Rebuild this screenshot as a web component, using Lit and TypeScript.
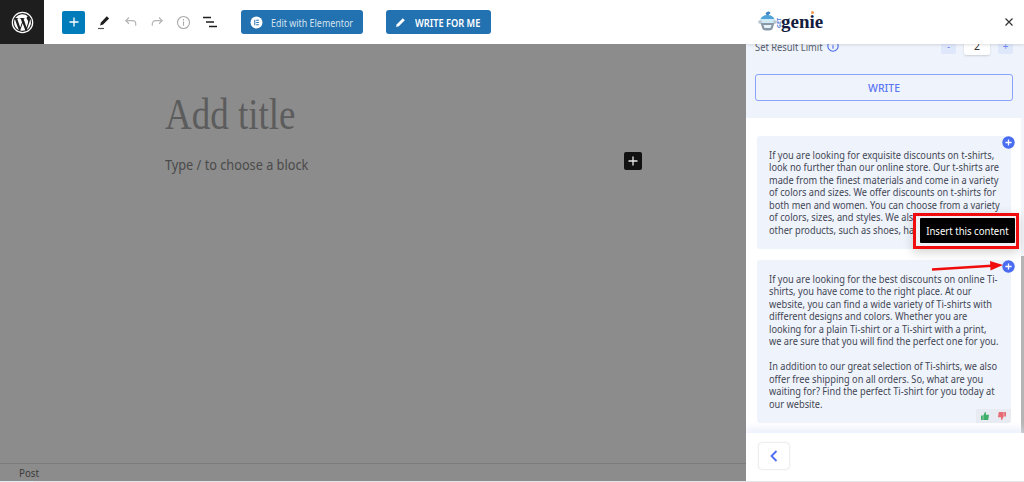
import { LitElement, html, css, svg } from "lit";
import { customElement } from "lit/decorators.js";

const plusBadge = svg`<svg width="13" height="13" viewBox="0 0 13 13"><circle cx="6.5" cy="6.5" r="6.2" fill="#4a6cf0"/><path d="M6.5 3.4v6.2M3.4 6.5h6.2" stroke="#fff" stroke-width="1.3"/></svg>`;

@customElement("app-root")
export class AppRoot extends LitElement {
  static styles = css`
    :host { display: block; width: 1024px; height: 482px; overflow: hidden; font-family: "Noto Sans", sans-serif; position: relative; background: #fff; }
    .page { display: flex; height: 481px; }
    .edge { height: 1px; background: #e2e6ea; }
    .edge i { display: block; height: 1px; width: 33px; background: #dcf0f4; }
    .left { width: 746px; display: flex; flex-direction: column; background: #8c8c8c; }
    .top { height: 44px; background: #fff; display: flex; align-items: center; flex: none; }
    .wp { width: 44px; height: 44px; background: #1e1e1e; display: flex; align-items: center; justify-content: center; }
    .add { width: 23px; height: 23px; margin-left: 18px; background: #007cba; border-radius: 2px; display: flex; align-items: center; justify-content: center; }
    .tools { display: flex; align-items: center; margin-left: 7px; gap: 2px; }
    .tools span { width: 24.5px; height: 24px; display: flex; align-items: center; justify-content: center; }
    .btn { height: 24px; background: #2271b1; border-radius: 3px; display: flex; align-items: center; box-sizing: border-box; white-space: nowrap; }
    .btn svg { flex: none; }
    .btn span { display: inline-block; transform-origin: left center; min-width: 0; flex: 1; }
    .elementor { width: 122px; margin-left: 18px; padding-left: 9px; gap: 8px; color: #d5e3ef; font-size: 11px; }
    .elementor span { transform: scaleX(.81); }
    .writefor { width: 105px; margin-left: 23px; padding-left: 9px; gap: 9px; font-weight: 600; font-size: 11px; color: #fff; }
    .writefor span { transform: scaleX(.84); }
    .main { flex: 1; padding: 47px 0 0 165px; }
    .title { font-family: "Liberation Serif", serif; font-size: 44px; line-height: 48px; color: #5c5c5c; font-weight: 400; transform: scaleX(.84); transform-origin: left center; }
    .block { width: 477px; display: flex; justify-content: space-between; align-items: center; margin-top: 15px; color: #4a4a4a; font-size: 14.5px; }
    .block span { display: inline-block; transform: scaleX(.877); transform-origin: left center; white-space: nowrap; }
    .block i { width: 18px; height: 18px; background: #111; border-radius: 2px; display: flex; align-items: center; justify-content: center; margin-top: -6px; }
    .status { height: 17px; border-top: 1px solid #7c7c7c; font-size: 11.5px; color: #3a3a3a; padding-left: 19px; line-height: 18px; flex: none; }
    .status span { display: inline-block; transform: scaleX(.85); transform-origin: left center; }

    .panel { width: 278px; position: relative; background: #fff; display: flex; flex-direction: column; overflow: hidden; }
    .head { height: 44px; flex: none; background: #fff; box-shadow: 0 1px 3px rgba(0,0,0,.12); position: relative; z-index: 2; display: flex; align-items: center; justify-content: space-between; padding: 0 10px 0 11px; box-sizing: border-box; }
    .logo { display: flex; align-items: center; position: relative; }
    .get { font-size: 5.5px; font-weight: 700; color: #4a78d8; transform: rotate(-90deg); width: 6px; margin: 6px 0 0 -2px; text-align: center; }
    .genie { font-family: "Liberation Serif", serif; font-weight: 700; font-size: 19px; color: #131c3f; line-height: 20px; margin-left: -1px; }
    .dot { position: absolute; left: 54px; top: 1px; width: 3px; height: 3px; border-radius: 50%; background: #f39a4a; }
    .config { height: 74px; flex: none; background: #eff3fb; padding: 0 11px 0 9px; box-sizing: border-box; }
    .limit { height: 24px; margin-top: -10px; display: flex; align-items: center; font-size: 11px; color: #555d6b; white-space: nowrap; }
    .limit > span { display: inline-block; transform: scaleX(.85); transform-origin: left center; width: 72px; }
    .stepper { margin-left: auto; display: flex; align-items: center; gap: 8px; }
    .stepper b { width: 15px; height: 16px; background: #dfe7fb; border-radius: 2px; color: #6f8cf0; font: 400 10px/16px "Noto Sans", sans-serif; text-align: center; }
    .stepper em { width: 26px; height: 18px; background: #fff; border-radius: 2px; box-shadow: 0 1px 2px rgba(0,0,0,.15); font: 400 10.5px/18px "Noto Sans", sans-serif; text-align: center; color: #333; }
    .write { height: 27px; margin-top: 16px; border: 1px solid #8aa2fa; border-radius: 3px; box-sizing: border-box; text-align: center; font-size: 10.5px; line-height: 26px; color: #5a76f2; font-weight: 500; }
    .results { flex: 1; min-height: 0; padding: 18px 13px 0 11px; display: flex; flex-direction: column; gap: 11px; position: relative; background: #fff; }
    .card { background: #eff3fb; border-radius: 3px; padding: 12.5px 12px 0 12px; font-size: 10.4px; line-height: 12.5px; color: #3f4654; position: relative; box-sizing: border-box; }
    .card p { margin: 0; white-space: nowrap; transform: scaleX(.889); transform-origin: left top; width: 260px; }
    .c1 { height: 113px; }
    .c2 { height: 163px; }
    .badge { position: absolute; right: -4px; top: 0; display: block; line-height: 0; }
    .rate { position: absolute; right: 0; bottom: 0; width: 35px; height: 14px; background: #e8ecf2; border-radius: 0 0 3px 0; display: flex; align-items: center; justify-content: space-around; }
    .track { position: absolute; right: 0; top: 0; bottom: 0; width: 3px; background: #f3f5fb; }
    .scroll { position: absolute; right: 0; top: 138px; width: 3px; height: 177px; background: #b5b5b5; }
    .foot { height: 48px; flex: none; background: #fff; padding: 10px 0 0 13px; box-sizing: border-box; box-shadow: 0 -5px 7px rgba(228,234,250,.7); position: relative; }
    .back { width: 30px; height: 26px; border-radius: 3px; background: #fff; box-shadow: 0 0 2px rgba(0,0,0,.25); display: flex; align-items: center; justify-content: center; }
    .tip { position: absolute; left: 167px; top: 213px; width: 106px; height: 36px; box-sizing: border-box; border: 3px solid #f00c0c; background: #eef0f4; padding: 2px 1px 2px 4px; z-index: 3; box-shadow: 0 3px 10px rgba(0,0,0,.18); }
    .tip div { background: #000; color: #fff; height: 25px; font-size: 11px; line-height: 25px; text-align: center; border-radius: 1px; white-space: nowrap; }
    .tip span { display: inline-block; transform: scaleX(.87); }
    .arrow { position: absolute; left: 184px; top: 258px; z-index: 3; display: block; }
  `;

  render() {
    return html`
      <div class="page">
        <div class="left">
          <div class="top">
            <div class="wp">
              <svg width="23" height="23" viewBox="0 0 24 24"><circle cx="12" cy="12" r="10.6" fill="none" stroke="#fff" stroke-width="1.3"/><path fill="#fff" d="M3.2 12c0 3.5 2 6.5 5 8L4 8.4A8.8 8.8 0 0 0 3.2 12zm14.700-.4c0-1.100-.4-1.800-.7-2.400-.5-.7-.9-1.300-.9-2 0-.8.6-1.500 1.400-1.500h.1A8.800 8.800 0 0 0 4.500 7.300h.6c.9 0 2.300-.1 2.300-.1.500 0 .5.700.1.700 0 0-.5.100-1 .1l3.100 9.300 1.900-5.600-1.300-3.700c-.5 0-.9-.1-.9-.1-.5 0-.4-.8.100-.7 0 0 1.400.1 2.300.1.900 0 2.300-.1 2.300-.1.500 0 .5.700.1.700 0 0-.5.100-1 .1l3.100 9.200.9-2.900c.4-1.200.7-2 .7-2.800zM12.200 12.800l-2.600 7.500a8.800 8.800 0 0 0 5.400-.1l-.1-.1-2.700-7.300zm7.500-4.900c0 .3.100.6.100.9 0 .9-.2 1.900-.7 3.200l-2.700 7.700A8.800 8.800 0 0 0 19.700 7.900z"/></svg>
            </div>
            <div class="add"><svg width="14" height="14" viewBox="0 0 14 14"><path d="M7 2.500v9M2.500 7h9" stroke="#fff" stroke-width="1.300"/></svg></div>
            <div class="tools">
              <span><svg width="18" height="18" viewBox="0 0 18 18"><path d="M11.800 3.200l2.300 2.200-6 6.200-3 .9.800-3z" fill="#1e1e1e"/><path d="M3 15.500h6" stroke="#555" stroke-width="1.200"/></svg></span>
              <span><svg width="16" height="16" viewBox="0 0 16 16" fill="none" stroke="#b5b5b5" stroke-width="1.200"><path d="M6 3.500L2.800 6.700 6 9.800M3 6.700h6.500c2 0 3.200 1.300 3.200 3v2"/></svg></span>
              <span><svg width="16" height="16" viewBox="0 0 16 16" fill="none" stroke="#b5b5b5" stroke-width="1.200"><path d="M10 3.500l3.200 3.200L10 9.800M13 6.700H6.500c-2 0-3.200 1.300-3.200 3v2"/></svg></span>
              <span><svg width="15" height="15" viewBox="0 0 15 15" fill="none" stroke="#aaa" stroke-width="1.100"><circle cx="7.500" cy="7.500" r="6"/><path d="M7.500 6.500v4.200M7.500 4v1.400"/></svg></span>
              <span><svg width="16" height="14" viewBox="0 0 16 14" stroke="#1e1e1e" stroke-width="1.300"><path d="M1 2.500h8M4 7h8M7 11.500h8"/></svg></span>
            </div>
            <div class="btn elementor">
              <svg width="13" height="13" viewBox="0 0 13 13"><circle cx="6.500" cy="6.500" r="6" fill="#fff"/><path d="M4.300 3.800h1v5.400h-1zM6.200 3.800h2.600v1H6.200zM6.200 6h2.600v1H6.200zM6.200 8.200h2.600v1H6.200z" fill="#2271b1"/></svg>
              <span>Edit with Elementor</span>
            </div>
            <div class="btn writefor">
              <svg width="11" height="11" viewBox="0 0 11 11"><path d="M7.800 1.200l2 2-6 6-2.800.8.800-2.800z" fill="#fff"/></svg>
              <span>WRITE FOR ME</span>
            </div>
          </div>
          <div class="main">
            <div class="title">Add title</div>
            <div class="block">
              <span>Type / to choose a block</span>
              <i><svg width="12" height="12" viewBox="0 0 12 12"><path d="M6 1.500v9M1.500 6h9" stroke="#e8e8e8" stroke-width="1.300"/></svg></i>
            </div>
          </div>
          <div class="status"><span>Post</span></div>
        </div>
        <div class="panel">
          <div class="head">
            <div class="logo">
              <svg width="21" height="24" viewBox="0 0 20 24"><path d="M8 3c2-2 4-2 5 0l-2 2-1 2z" fill="#3d86c6"/><ellipse cx="10" cy="10" rx="7" ry="5" fill="#4fa3d8"/><rect x="2" y="9" width="16" height="5" rx="2" fill="#cfeaf5"/><path d="M3 13h14l-2 6c-1 2-9 2-10 0z" fill="#8a99a8"/><path d="M6 15h8l-1 3H7z" fill="#e7f3f8"/><circle cx="2.500" cy="12" r="1.800" fill="#b9c4cc"/><circle cx="17.500" cy="12" r="1.800" fill="#b9c4cc"/></svg>
              <span class="get">GET</span>
              <span class="genie">genie</span>
              <i class="dot"></i>
            </div>
            <svg width="10" height="10" viewBox="0 0 10 10"><path d="M1.500 1.500l7 7M8.500 1.500l-7 7" stroke="#333" stroke-width="1.200"/></svg>
          </div>
          <div class="config">
            <div class="limit">
              <span>Set Result Limit</span>
              <svg width="12" height="12" viewBox="0 0 12 12" fill="none" stroke="#4a6cf0" stroke-width="1.100"><circle cx="6" cy="6" r="5.200"/><path d="M6 5.200v3.600M6 3v1.200"/></svg>
              <div class="stepper"><b>-</b><em>2</em><b>+</b></div>
            </div>
            <div class="write">WRITE</div>
          </div>
          <div class="results">
            <div class="card c1">
              <span class="badge">${plusBadge}</span>
              <p>If you are looking for exquisite discounts on t-shirts,<br>look no further than our online store. Our t-shirts are<br>made from the finest materials and come in a variety<br>of colors and sizes. We offer discounts on t-shirts for<br>both men and women. You can choose from a variety<br>of colors, sizes, and styles. We also offer a variety of<br>other products, such as shoes, hats, and more.</p>
            </div>
            <div class="card c2">
              <span class="badge">${plusBadge}</span>
              <p>If you are looking for the best discounts on online Ti-<br>shirts, you have come to the right place. At our<br>website, you can find a wide variety of Ti-shirts with<br>different designs and colors. Whether you are<br>looking for a plain Ti-shirt or a Ti-shirt with a print,<br>we are sure that you will find the perfect one for you.<br><br>In addition to our great selection of Ti-shirts, we also<br>offer free shipping on all orders. So, what are you<br>waiting for? Find the perfect Ti-shirt for you today at<br>our website.</p>
              <div class="rate">
                <svg width="10" height="10" viewBox="0 0 10 10"><path d="M1 4.500h1.800V9H1zM3.300 4.500L5 1c.9 0 1.100.7 1 1.300L5.800 3.800H9l-.8 5.200H3.300z" fill="#3fae6b"/></svg>
                <svg width="10" height="10" viewBox="0 0 10 10"><path d="M9 5.500H7.200V1H9zM6.700 5.500L5 9c-.9 0-1.100-.7-1-1.300l.2-1.500H1l.8-5.200h4.900z" fill="#e86a72"/></svg>
              </div>
            </div>
            <div class="track"></div>
            <div class="scroll"></div>
          </div>
          <div class="foot">
            <div class="back"><svg width="10" height="14" viewBox="0 0 10 14" fill="none" stroke="#4a6cf0" stroke-width="1.800"><path d="M7.500 2L2.500 7l5 5"/></svg></div>
          </div>
          <div class="tip"><div><span>Insert this content</span></div></div>
          <svg class="arrow" width="76" height="16" viewBox="0 0 76 16"><path d="M2 11.500L62 7.800" stroke="#f00c0c" stroke-width="2.500"/><path d="M60 3L73 7 60.500 12.500z" fill="#f00c0c"/></svg>
        </div>
      </div>
      <div class="edge"><i></i></div>
    `;
  }
}
